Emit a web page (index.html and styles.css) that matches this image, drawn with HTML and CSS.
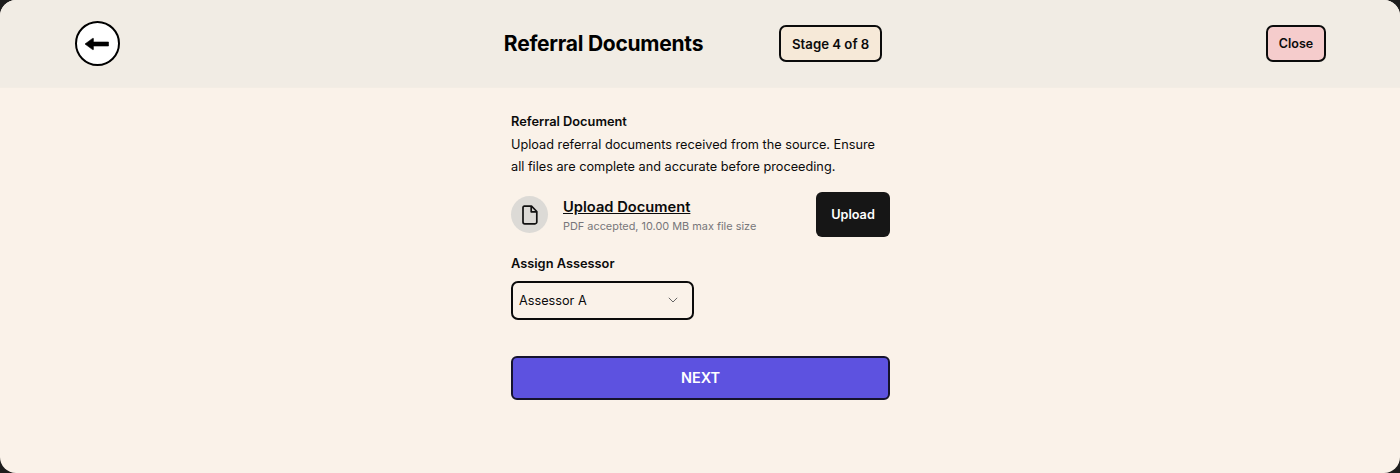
FILE: index.html
```html
<!DOCTYPE html>
<html lang="en">
<head>
<meta charset="utf-8">
<title>Referral Documents</title>
<link rel="stylesheet" href="styles.css">
</head>
<body>
<div class="modal">
  <header class="header">
    <button class="back" aria-label="Back">
      <svg class="back-arrow" width="26" height="14" viewBox="0 0 26 14"><path d="M1 7 L8.6 1.4 H9.4 V5 H24.5 V9 H9.4 V12.6 H8.6 Z" fill="#000" stroke="#000" stroke-width="0.6" stroke-linejoin="round"/></svg>
    </button>
    <div class="head-center">
      <h1 class="title">Referral Documents</h1>
      <span class="stage">Stage 4 of 8</span>
    </div>
    <button class="close">Close</button>
  </header>
  <main class="content">
    <div class="form">
      <h2 class="label">Referral Document</h2>
      <p class="desc">Upload referral documents received from the source. Ensure all files are complete and accurate before proceeding.</p>
      <div class="upload">
        <div class="file-icon">
          <svg width="18" height="20" viewBox="0 0 18 20" fill="none" stroke="#111" stroke-width="1.7" stroke-linejoin="round"><path d="M3.2 1.2 H10.5 L15.8 6.5 V17 a1.8 1.8 0 0 1 -1.8 1.8 H3.8 a1.8 1.8 0 0 1 -1.8 -1.8 V2.6 a1.4 1.4 0 0 1 1.2 -1.4 Z"/><path d="M10.2 1.4 V6.8 H15.6"/></svg>
        </div>
        <div class="upload-text">
          <a class="upload-link" href="#">Upload Document</a>
          <span class="hint">PDF accepted, 10.00 MB max file size</span>
        </div>
        <button class="upload-btn">Upload</button>
      </div>
      <h2 class="label assign">Assign Assessor</h2>
      <div class="select">
        <span>Assessor A</span>
        <svg width="10" height="6" viewBox="0 0 10 6" fill="none" stroke="#666" stroke-width="1"><path d="M0.8 0.8 L5 5 L9.2 0.8"/></svg>
      </div>
      <button class="next">NEXT</button>
    </div>
  </main>
</div>
</body>
</html>
```
FILE: styles.css
```css
* { box-sizing: border-box; }
html, body { margin: 0; height: 100%; background: #1d1d1d; }
body { font-family: Inter, "Liberation Sans", sans-serif; color: #0b0b0b; overflow: hidden; }
button { font-family: inherit; cursor: pointer; }
.modal { height: 473px; display: flex; flex-direction: column; background: #faf2e9; border-radius: 16px; overflow: hidden; }
.header { height: 88px; flex: none; display: flex; align-items: center; justify-content: space-between; padding: 0 74px 0 75px; background: #f1ece4; border-bottom: 1px solid #f3ede4; }
.back { width: 45px; height: 45px; padding: 0 2px 0 0; border: 2px solid #000; border-radius: 50%; background: #fff; display: flex; align-items: center; justify-content: center; }
.head-center { display: flex; align-items: center; gap: 76px; }
.title { margin: 0; font-size: 21px; font-weight: 700; letter-spacing: -0.25px; color: #000; }
.stage { height: 37px; width: 103px; display: flex; align-items: center; justify-content: center; border: 2px solid #0b0b0b; border-radius: 7px; background: #f6e9d8; font-size: 13.2px; font-weight: 600; }
.close { height: 37px; width: 60px; padding: 0; border: 2px solid #0b0b0b; border-radius: 7px; background: #f5cccc; color: #0b0b0b; font-size: 12.5px; font-weight: 600; }
.content { flex: 1; display: flex; justify-content: center; }
.form { width: 380px; padding-top: 24px; }
.label { margin: 0 0 0 1px; font-size: 12.8px; line-height: 19px; font-weight: 600; color: #0b0b0b; }
.desc { margin: 3px 0 0 1px; width: 372px; font-size: 12.73px; line-height: 22px; color: #0b0b0b; }
.upload { display: flex; align-items: center; margin-top: 14px; height: 45px; }
.file-icon { width: 37px; height: 37px; flex: none; margin-left: 1px; border-radius: 50%; background: #dcdad6; display: flex; align-items: center; justify-content: center; }
.upload-text { flex: 1; margin-left: 15px; display: flex; flex-direction: column; gap: 1px; padding-top: 1px; }
.upload-link { font-size: 14.7px; line-height: 22px; font-weight: 600; color: #0b0b0b; }
.hint { font-size: 10.9px; line-height: 15px; color: #77767a; }
.upload-btn { width: 74px; height: 45px; border: 0; border-radius: 6px; background: #161616; color: #fff; font-size: 12.7px; font-weight: 600; }
.assign { margin: 17px 0 0 1px; }
.select { margin: 8px 0 0 1px; width: 183px; height: 38.5px; display: flex; align-items: center; justify-content: space-between; padding: 0 14px 0 6px; border: 2px solid #0b0b0b; border-radius: 7px; font-size: 12.7px; }
.next { display: block; margin: 36.5px 0 0 1px; width: 379px; height: 44px; padding: 0 0 2px; border: 2px solid #15132e; border-radius: 6px; background: #5d52e0; color: #fff; font-size: 14.5px; font-weight: 600; }
```
